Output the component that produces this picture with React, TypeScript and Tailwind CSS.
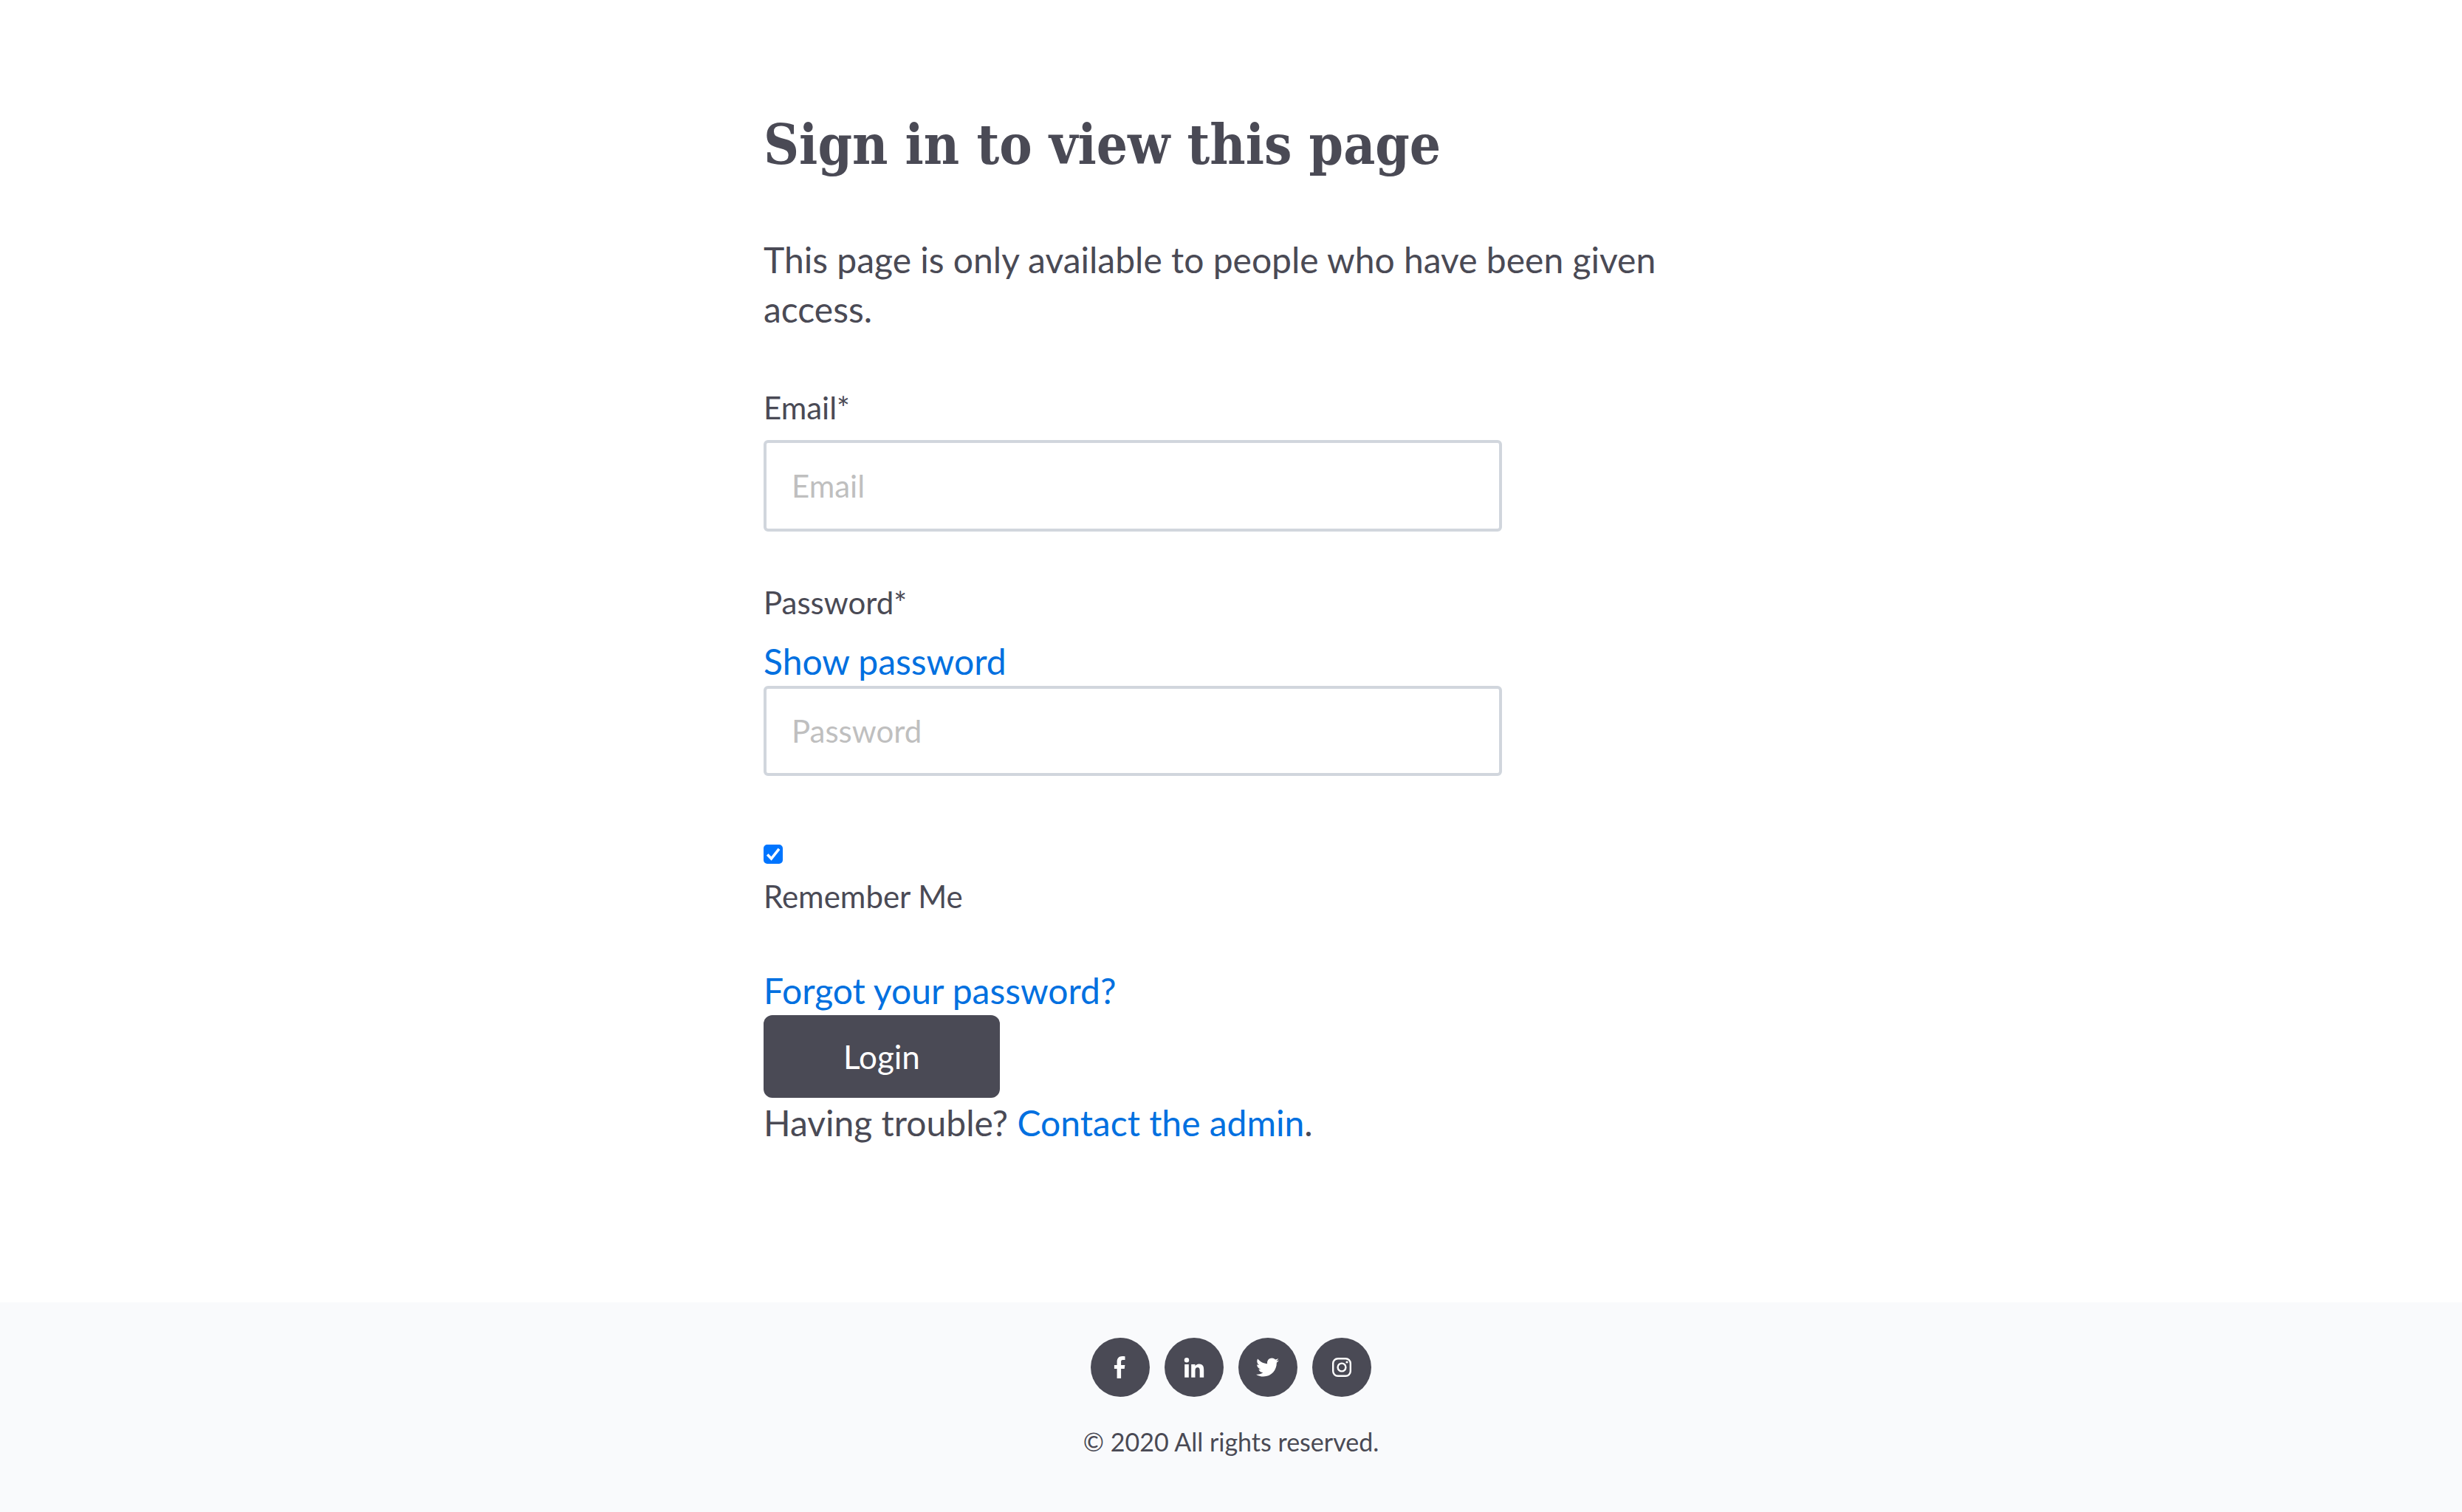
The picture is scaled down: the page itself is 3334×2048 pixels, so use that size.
import { useState } from "react";
import type { ReactNode } from "react";

const linkClass = "text-[#0070e0] hover:underline";
const labelClass = "block text-[42px] leading-[60px]";
const inputClass =
  "block w-full max-w-[1000px] rounded-md border-4 border-[#d1d6dd] bg-white px-[34px] text-[42px] text-[#4a4a55] placeholder:text-[#bfbfbf]";

function FacebookIcon() {
  return (
    <svg viewBox="0 0 80 80" className="size-20" fill="currentColor" aria-hidden="true">
      <path d="M46.500 25.200v4.800h-2.800c-2.200 0-2.600 1-2.600 2.600v4.400h5.300l-.7 4.900h-4.600V55h-5.500V41.900H31.900V37h3.700v-4.600c0-4.700 2.800-7.400 7-7.400 2 0 3.600.1 3.900.2z" />
    </svg>
  );
}

function LinkedinIcon() {
  return (
    <svg viewBox="0 0 80 80" className="size-20" fill="currentColor" aria-hidden="true">
      <circle cx="30" cy="30.200" r="3.200" />
      <path d="M27.200 36h5.600v17.700h-5.600zM36.200 36h5.300v2.400c.8-1.500 2.600-2.900 5.300-2.900 5.500 0 6.400 3.600 6.400 8.300v9.900h-5.500v-8.700c0-2.100 0-4.800-2.900-4.800s-3.300 2.300-3.300 4.600v8.900h-5.300z" />
    </svg>
  );
}

function TwitterIcon() {
  return (
    <svg viewBox="0 0 80 80" className="size-20" fill="currentColor" aria-hidden="true">
      <g transform="translate(24 24.500) scale(1.290)">
        <path d="M23.954 4.569c-.885.389-1.83.654-2.825.775 1.014-.611 1.794-1.574 2.163-2.723-.951.555-2.005.959-3.127 1.184-.896-.959-2.173-1.559-3.591-1.559-2.717 0-4.920 2.203-4.920 4.917 0 .390.045.765.127 1.124C7.691 8.094 4.066 6.130 1.640 3.161c-.427.722-.666 1.561-.666 2.475 0 1.710.870 3.213 2.188 4.096-.807-.026-1.566-.248-2.228-.616v.061c0 2.385 1.693 4.374 3.946 4.827-.413.111-.849.171-1.296.171-.314 0-.615-.030-.916-.086.631 1.953 2.445 3.377 4.604 3.417-1.680 1.319-3.809 2.105-6.102 2.105-.390 0-.779-.023-1.170-.067 2.189 1.394 4.768 2.209 7.557 2.209 9.054 0 13.999-7.496 13.999-13.986 0-.209 0-.420-.015-.630.961-.689 1.800-1.560 2.460-2.548l-.047-.020z" />
      </g>
    </svg>
  );
}

function InstagramIcon() {
  return (
    <svg viewBox="0 0 80 80" className="size-20" fill="none" stroke="currentColor" aria-hidden="true">
      <rect x="28.200" y="28.200" width="23.600" height="23.600" rx="6.500" strokeWidth="2.400" />
      <circle cx="40" cy="40" r="5.400" strokeWidth="2.400" />
      <circle cx="47" cy="33" r="1.600" fill="currentColor" stroke="none" />
    </svg>
  );
}

function SocialLink({ label, children }: { label: string; children: ReactNode }) {
  return (
    <a href="#" aria-label={label} className="size-20 overflow-hidden rounded-full bg-[#4a4a55] text-white">
      {children}
    </a>
  );
}

export default function App() {
  const [visible, setVisible] = useState(false);

  return (
    <div className="flex min-h-screen flex-col bg-white font-['Lato',sans-serif] text-[48px] leading-[67px] text-[#4a4a55]">
      <main className="mx-auto w-full max-w-[1266px] grow pt-[140px] pb-[210px]">
        <h1 className="mb-[66px] font-['DejaVu_Serif_Condensed','DejaVu_Serif',serif] text-[74px] leading-[112px] font-bold">
          Sign in to view this page
        </h1>
        <p>This page is only available to people who have been given access.</p>

        <form onSubmit={(e) => e.preventDefault()}>
          <div className="mt-[70px]">
            <label htmlFor="email" className={labelClass}>
              Email*
            </label>
            <input id="email" type="email" placeholder="Email" className={`${inputClass} mt-[14px] h-[124px]`} />
          </div>

          <div className="mt-[66px]">
            <label htmlFor="password" className={labelClass}>
              Password*
            </label>
            <button
              type="button"
              onClick={() => setVisible(!visible)}
              className="mt-4 block cursor-pointer text-[#0070e0] hover:underline"
            >
              Show password
            </button>
            <input
              id="password"
              type={visible ? "text" : "password"}
              placeholder="Password"
              className={`${inputClass} h-[122px]`}
            />
          </div>

          <div className="mt-[93px]">
            <span className="relative block size-[26px]">
              <input
                id="remember"
                type="checkbox"
                defaultChecked
                className="peer block size-[26px] appearance-none rounded-[5px] border-2 border-[#767676] bg-white checked:border-[#0075ff] checked:bg-[#0075ff]"
              />
              <svg
                viewBox="0 0 26 26"
                className="pointer-events-none absolute inset-0 hidden size-[26px] text-white peer-checked:block"
                fill="none"
                stroke="currentColor"
                strokeWidth="3.600"
                aria-hidden="true"
              >
                <path d="M5.200 13.600l5.300 5.400L21 5.800" />
              </svg>
            </span>
            <label htmlFor="remember" className={`${labelClass} mt-[14px]`}>
              Remember Me
            </label>
          </div>

          <div className="mt-16">
            <a href="#" className={linkClass}>
              Forgot your password?
            </a>
          </div>
          <button
            type="submit"
            className="block h-28 w-80 cursor-pointer rounded-xl bg-[#4a4a55] text-[44px] text-white"
          >
            Login
          </button>
          <p>
            Having trouble?{" "}
            <a href="#" className={linkClass}>
              Contact the admin
            </a>
            .
          </p>
        </form>
      </main>

      <footer className="bg-[#f9fafc] pt-12 pb-[71px] text-center">
        <div className="flex justify-center gap-5">
          <SocialLink label="Facebook">
            <FacebookIcon />
          </SocialLink>
          <SocialLink label="LinkedIn">
            <LinkedinIcon />
          </SocialLink>
          <SocialLink label="Twitter">
            <TwitterIcon />
          </SocialLink>
          <SocialLink label="Instagram">
            <InstagramIcon />
          </SocialLink>
        </div>
        <p className="mt-[37px] text-[34px] leading-[48px]">© 2020 All rights reserved.</p>
      </footer>
    </div>
  );
}
